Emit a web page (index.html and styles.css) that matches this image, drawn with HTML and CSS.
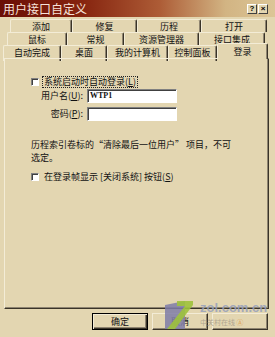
FILE: index.html
```html
<!DOCTYPE html>
<html lang="zh-CN">
<head>
<meta charset="utf-8">
<title>用户接口自定义</title>
<link rel="stylesheet" href="styles.css">
</head>
<body>
<div class="window">
  <div class="titlebar">
    <span class="title">用户接口自定义</span>
    <div class="ctrls">
      <span class="cbtn">?</span>
      <span class="cbtn">×</span>
    </div>
  </div>
  <div class="tabs">
    <div class="row r1">
      <div class="tab">添加</div>
      <div class="tab">修复</div>
      <div class="tab">历程</div>
      <div class="tab">打开</div>
    </div>
    <div class="row r2">
      <div class="tab">鼠标</div>
      <div class="tab">常规</div>
      <div class="tab">资源管理器</div>
      <div class="tab">接口集成</div>
    </div>
    <div class="row r3">
      <div class="tab">自动完成</div>
      <div class="tab">桌面</div>
      <div class="tab">我的计算机</div>
      <div class="tab">控制面板</div>
      <div class="tab sel">登录</div>
    </div>
  </div>
  <div class="panel">
    <div class="chk">
      <span class="box"></span>
      <span class="lbl focus">系统启动时自动登录(<u>L</u>)</span>
    </div>
    <div class="form">
      <span class="flabel">用户名(<u>U</u>):</span>
      <span class="field">WTP1</span>
      <span class="flabel">密码(<u>P</u>):</span>
      <span class="field"></span>
    </div>
    <p class="note">历程索引卷标的“清除最后一位用户” 项目，不可<br>选定。</p>
    <div class="chk chk2">
      <span class="box"></span>
      <span class="lbl">在登录帧显示 [关闭系统] 按钮(<u>S</u>)</span>
    </div>
  </div>
  <div class="buttons">
    <span class="btn def">确定</span>
    <span class="btn">取消</span>
    <span class="btn"></span>
  </div>
  <div class="watermark">
    <svg class="wlogo" width="28" height="28" viewBox="0 0 28 28">
      <polygon points="0,4 20,0 20,28 0,28" fill="#7f7ca8" opacity="0.85"/>
      <polygon points="12,0 28,0 28,4 10,28 2,28 20,5 12,5" fill="#9dc23c" opacity="0.9"/>
    </svg>
    <div class="wtext">
      <span class="wsite">zol.com.cn</span>
      <span class="wcn">中关村在线 <span class="wa">Ⓐ</span></span>
    </div>
  </div>
</div>
</body>
</html>
```
FILE: styles.css
```css
* { box-sizing: border-box; }
body {
  margin: 0;
  background: #e3d6b1;
  font-family: "Noto Sans CJK SC", sans-serif;
  font-size: 9px;
  color: #111;
}
.window {
  width: 275px;
  height: 337px;
  background: #e3d6b1;
  display: flex;
  flex-direction: column;
  position: relative;
  overflow: hidden;
}
.titlebar {
  height: 17px;
  background: linear-gradient(90deg, #6a0e06 0%, #86240f 30%, #ad5c36 58%, #d2b483 82%, #dcc697 100%);
  display: flex;
  align-items: center;
  justify-content: space-between;
  padding: 0 7px 0 3px;
}
.title {
  color: #f6e2da;
  font-size: 12px;
  line-height: 15px;
}
.ctrls { display: flex; gap: 1px; }
.cbtn {
  width: 10px;
  height: 10px;
  background: #e3d6b1;
  border: 1px solid;
  border-color: #fff #404040 #404040 #fff;
  font: bold 8px/8px "Liberation Sans", sans-serif;
  text-align: center;
  color: #000;
}
.tabs {
  padding-top: 2px;
  display: flex;
  flex-direction: column;
}
.row { display: grid; height: 13px; }
.r1 { margin-left: 10px; grid-template-columns: 62px 65px 64px 66px; }
.r2 { margin-left: 7px; grid-template-columns: 60px 57px 75px 66px; }
.r3 { margin-left: 3px; grid-template-columns: 58px 46px 61px 49px 51px; }
.tab {
  border-top: 1px solid #f3ecd6;
  border-left: 1px solid #f3ecd6;
  border-right: 1px solid #3a3428;
  border-radius: 2px 2px 0 0;
  text-align: center;
  line-height: 10px;
  padding-top: 2px;
  box-shadow: inset -1px 0 #8e8470;
  white-space: nowrap;
}
.tab.sel {
  position: relative;
  top: -2px;
  height: 16px;
  z-index: 1;
  background: #e3d6b1;
  padding-top: 3px;
}
.panel {
  margin-left: 4px;
  width: 265px;
  height: 251px;
  border: 1px solid;
  border-color: #f3ecd6 #3a3428 #3a3428 #f3ecd6;
  box-shadow: inset -1px -1px #8e8470;
  padding: 17px 0 0 26px;
  display: flex;
  flex-direction: column;
}
.chk {
  display: flex;
  align-items: center;
  gap: 3px;
  height: 12px;
}
.box {
  width: 8px;
  height: 8px;
  background: #fff;
  border: 1px solid;
  border-color: #808080 #fff #fff #808080;
  box-shadow: inset 1px 1px #404040;
  flex: none;
}
.lbl { line-height: 10px; padding: 0 1px; border: 1px solid transparent; white-space: nowrap; }
.lbl.focus { border: 1px dotted #222; }
.form {
  margin-top: 1px;
  display: grid;
  grid-template-columns: 56px 90px;
  grid-auto-rows: 14px;
  row-gap: 4px;
}
.flabel {
  text-align: right;
  padding-right: 4px;
  line-height: 14px;
  white-space: nowrap;
}
.field {
  background: #fff;
  border: 1px solid;
  border-color: #808080 #fff #fff #808080;
  box-shadow: inset 1px 1px #404040;
  font: bold 8px/12px "Liberation Serif", serif;
  padding-left: 2px;
}
.note {
  margin: 17px 0 0;
  width: 220px;
  line-height: 13px;
  white-space: nowrap;
}
.chk2 { margin-top: 7px; }
.buttons {
  margin-top: 4px;
  display: flex;
  justify-content: flex-end;
  gap: 4px;
  padding-right: 7px;
}
.btn {
  width: 56px;
  height: 17px;
  border: 1px solid;
  border-color: #f3ecd6 #3a3428 #3a3428 #f3ecd6;
  box-shadow: inset -1px -1px #8e8470;
  text-align: center;
  line-height: 15px;
}
.btn.def {
  border-color: #000;
  box-shadow: inset 1px 1px #f3ecd6, inset -1px -1px #3a3428, inset -2px -2px #8e8470;
}
.watermark {
  position: absolute;
  left: 165px;
  top: 301px;
  display: flex;
  gap: 7px;
  pointer-events: none;
}
.wtext { display: flex; flex-direction: column; }
.wsite {
  font: bold 13px/14px "Liberation Sans", sans-serif;
  color: rgba(150, 160, 188, 0.85);
}
.wcn {
  font-size: 7px;
  line-height: 10px;
  margin-top: 2px;
  color: rgba(170, 160, 140, 0.9);
}
.wa { color: rgba(220, 150, 70, 0.8); }
```
